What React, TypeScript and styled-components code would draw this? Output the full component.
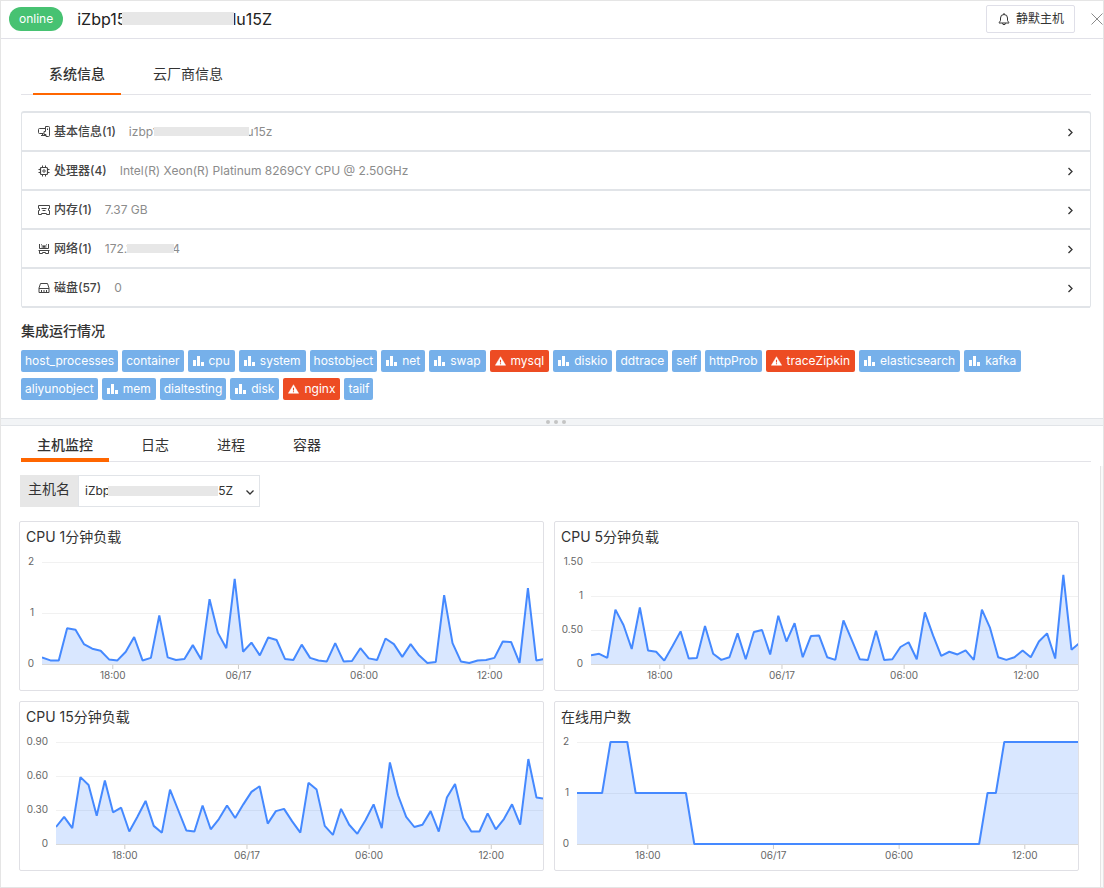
import React from "react";
import styled, { createGlobalStyle } from "styled-components";

const GlobalStyle = createGlobalStyle`
  *, *::before, *::after { box-sizing: border-box; }
  body {
    margin: 0;
    background: #fff;
    color: #333;
    font-family: Inter, "Noto Sans CJK SC", sans-serif;
    font-size: 12px;
    line-height: 20px;
  }
  button, select { font: inherit; color: inherit; }
`;

const line = "#e1e4e8";
const orange = "#ff6600";

const Page = styled.div`
  min-height: 100vh;
  border: 1px solid #e5e5e5;
  display: flex;
  flex-direction: column;
`;

const Header = styled.header`
  display: flex;
  align-items: center;
  height: 38px;
  padding: 0 0 2px 8px;
  border-bottom: 1px solid #e1e1e8;
`;

const Status = styled.span`
  height: 24px;
  padding: 0 10px;
  border-radius: 12px;
  background: #47c272;
  color: #fff;
  line-height: 24px;
`;

const HostTitle = styled.h1`
  flex: 1;
  display: flex;
  align-items: center;
  margin: 0 0 0 14px;
  font-size: 16px;
  font-weight: 400;
  color: #222;
`;

const Mask = styled.span<{ $width: number; $height?: number }>`
  position: relative;
  width: ${(p) => p.$width}px;
  height: ${(p) => p.$height ?? 9}px;
  margin: 0 -2px 0 -4px;
  background: #e7e7e7;
`;

const MuteButton = styled.button`
  display: flex;
  align-items: center;
  gap: 5px;
  height: 28px;
  padding: 0 10px;
  border: 1px solid #dfdfe8;
  border-radius: 2px;
  background: #fff;
`;

const CloseButton = styled.button`
  display: flex;
  margin-left: 16px;
  padding: 0;
  border: 0;
  background: none;
  color: #8a8a8a;
`;

const TabList = styled.nav<{ $compact?: boolean }>`
  display: flex;
  gap: 16px;
  height: ${(p) => (p.$compact ? 36 : 56)}px;
  margin: 0 12px 0 20px;
  padding-left: ${(p) => (p.$compact ? 0 : 12)}px;
  border-bottom: 1px solid #e3e3e8;
`;

const Tab = styled.button<{ $active?: boolean; $compact?: boolean }>`
  margin-bottom: -1px;
  padding: ${(p) => (p.$compact ? "6px 16px 0" : "16px 16px 0")};
  border: 0;
  border-bottom: ${(p) => (p.$compact ? 4 : 2)}px solid ${(p) => (p.$active ? orange : "transparent")};
  background: none;
  font-size: 14px;
  font-weight: ${(p) => (p.$active ? 500 : 400)};
`;

const InfoList = styled.div`
  margin: 16px 12px 0 20px;
  border: 1px solid ${line};
  border-width: 2px 1px 0;
  border-radius: 3px;
`;

const InfoRow = styled.button`
  display: flex;
  align-items: center;
  width: 100%;
  height: 39px;
  padding: 0 14px 0 16px;
  border: 0;
  border-bottom: 2px solid ${line};
  background: none;
  text-align: left;
`;

const InfoLabel = styled.span`
  margin: 0 13px 0 4px;
  font-weight: 500;
  color: #444;
`;

const InfoValue = styled.span`
  flex: 1;
  display: flex;
  align-items: center;
  color: #8c8c8c;
`;

const Section = styled.section`
  padding: 13px 12px 18px 20px;
`;

const SectionTitle = styled.h2`
  margin: 0 0 9px;
  font-size: 14px;
  font-weight: 500;
  line-height: 20px;
`;

const Tags = styled.div`
  display: flex;
  flex-wrap: wrap;
  gap: 6px 4px;
`;

const TagBox = styled.span<{ $kind?: "metric" | "alert" }>`
  display: flex;
  align-items: center;
  gap: 5px;
  height: 22px;
  padding: 0 ${(p) => (p.$kind ? 5 : 4)}px;
  border-radius: 2px;
  background: ${(p) => (p.$kind === "alert" ? "#ed4c23" : "#76b0ea")};
  color: #fff;
`;

const Splitter = styled.div`
  display: flex;
  align-items: center;
  justify-content: center;
  gap: 4px;
  height: 8px;
  padding-left: 8px;
  border: 1px solid ${line};
  border-width: 1px 0;
  background: #f2f4f6;
`;

const Dot = styled.i`
  width: 4px;
  height: 4px;
  border-radius: 2px;
  background: #c4c4c4;
`;

const Monitor = styled.div`
  flex: 1;
  display: flex;
  margin-top: 4px;
`;

const MonitorBody = styled.div`
  flex: 1;
  min-width: 0;
  padding: 9px 21px 16px 18px;
`;

const ScrollTrack = styled.div`
  width: 3px;
  border-left: 1px solid #e4e4e4;
  background: #fafafa;
`;

const Filter = styled.div`
  display: flex;
  height: 32px;
  margin: 0 0 14px 1px;
`;

const FilterLabel = styled.label`
  padding: 4px 8px;
  background: #e7e7e7;
  font-size: 14px;
`;

const SelectBox = styled.div`
  position: relative;
  width: 182px;
`;

const HostSelect = styled.select`
  width: 100%;
  height: 100%;
  padding: 0 24px 0 6px;
  border: 1px solid ${line};
  border-radius: 0;
  background: #fff;
  appearance: none;
`;

const SelectMask = styled.span`
  position: absolute;
  top: 11px;
  left: 30px;
  width: 110px;
  height: 10px;
  background: #e7e7e7;
  pointer-events: none;
`;

const SelectArrow = styled.svg`
  position: absolute;
  top: 12px;
  right: 5px;
  pointer-events: none;
`;

const Charts = styled.div`
  display: grid;
  grid-template-columns: 1fr 1fr;
  gap: 10px;
`;

const Panel = styled.article`
  height: 170px;
  border: 1px solid #e0e0e5;
  border-radius: 2px;
`;

const PanelTitle = styled.h3`
  margin: 5px 6px 8px;
  font-size: 14px;
  font-weight: 400;
  line-height: 20px;
`;

const ChartRow = styled.div`
  display: flex;
`;

const YAxis = styled.div<{ $wide?: boolean }>`
  display: flex;
  flex-direction: column;
  justify-content: space-between;
  align-items: flex-end;
  width: ${(p) => (p.$wide ? 36 : 22)}px;
  height: 114px;
  padding-right: 8px;
  font-size: 10px;
  line-height: 12px;
  color: #666;
`;

const Plot = styled.svg`
  flex: 1;
  min-width: 0;
  height: 122px;
  margin-top: 7px;
  overflow: visible;
  font-size: 10px;
  fill: #666;
`;

const stroke = { fill: "none", stroke: "currentColor", strokeWidth: 1 } as const;

const BellIcon = () => (
  <svg width="14" height="14" viewBox="0 0 14 14" {...stroke}>
    <path d="M3.5 8V6a3.5 3.5 0 0 1 7 0v2c0 1 .5 1.6 1.5 2.5v.5H2v-.5C3 9.6 3.5 9 3.5 8zM7 1v1.5M5.5 11.2a1.5 1.5 0 0 0 3 0" />
  </svg>
);

const CloseIcon = () => (
  <svg width="12" height="12" viewBox="0 0 12 12" {...stroke}>
    <path d="M.5 .5l11 11M11.5 .5l-11 11" />
  </svg>
);

const ChevronIcon = () => (
  <svg width="12" height="12" viewBox="0 0 12 12" {...stroke} stroke="#333" strokeWidth={1.3}>
    <path d="M4.5 3L8 6.5l-3.5 3.5" />
  </svg>
);

const icons: Record<string, React.ReactNode> = {
  host: (
    <>
      <path d="M7 2.5H1.5Q.5 2.5 .5 3.5V6.5Q.5 7.5 1.5 7.5H5.5M3 9.5h5M4.5 7.5v2" />
      <path d="M8 .5h2.5q1 0 1 1v8q0 1-1 1H8V8.5H6V5.5h1.5V.5zM9.5 2.5v1.5" />
    </>
  ),
  cpu: (
    <>
      <rect x="2.5" y="2.5" width="7" height="7" rx="1" strokeWidth={1.2} />
      <circle cx="6" cy="6" r="1.2" />
      <path d="M4.5 .5v2M7.5 .5v2M4.5 9.5v2M7.5 9.5v2M.5 4.5h2M.5 7.5h2M9.5 4.5h2M9.5 7.5h2" />
    </>
  ),
  memory: (
    <>
      <path d="M.5 1.5h11v3h-1v2h1v4h-3v-1h-5v1h-3v-4h1v-2h-1z" />
      <path d="M3.5 4.5h5M4.5 6.5h3" />
    </>
  ),
  network: (
    <>
      <path d="M1.5 1v4.5h9V1M3 1.500l1.500 1M9 1.500l-1.500 1M3.500 4h5M.5 7.500h11" />
      <path d="M1.500 7.500v3h3v-1h3v1h3v-3" />
      <circle cx="6" cy="3.5" r="1.2" fill="currentColor" stroke="none" />
    </>
  ),
  disk: <path d="M1 6l1.5-4.5h7L11 6v4.500H1zM1 6.5h10M3.5 8v2.5M6 8v2.5M8.5 8v2.5" />,
};

const BarsIcon = () => (
  <svg width="11" height="10" viewBox="0 0 11 10" fill="#fff">
    <path d="M0 4h3v6H0zM4 0h3v10H4zM8 6h3v4H8z" />
  </svg>
);

const AlertIcon = () => (
  <svg width="11" height="10" viewBox="0 0 12 10">
    <path d="M6 .3L11.6 9.7H.4z" fill="#fff" stroke="#fff" strokeWidth=".5" strokeLinejoin="round" />
    <path d="M6 3.5v3M6 7.4v1.2" stroke="#ed4c23" strokeWidth="1.2" />
  </svg>
);

type Info = { icon: string; label: string; before: string; mask?: number; after?: string };

const infos: Info[] = [
  { icon: "host", label: "基本信息(1)", before: "izbp1", mask: 95, after: "u15z" },
  { icon: "cpu", label: "处理器(4)", before: "Intel(R) Xeon(R) Platinum 8269CY CPU @ 2.50GHz" },
  { icon: "memory", label: "内存(1)", before: "7.37 GB" },
  { icon: "network", label: "网络(1)", before: "172.1", mask: 47, after: "4" },
  { icon: "disk", label: "磁盘(57)", before: "0" },
];

const tags: { name: string; kind?: "metric" | "alert" }[] = [
  { name: "host_processes" },
  { name: "container" },
  { name: "cpu", kind: "metric" },
  { name: "system", kind: "metric" },
  { name: "hostobject" },
  { name: "net", kind: "metric" },
  { name: "swap", kind: "metric" },
  { name: "mysql", kind: "alert" },
  { name: "diskio", kind: "metric" },
  { name: "ddtrace" },
  { name: "self" },
  { name: "httpProb" },
  { name: "traceZipkin", kind: "alert" },
  { name: "elasticsearch", kind: "metric" },
  { name: "kafka", kind: "metric" },
  { name: "aliyunobject" },
  { name: "mem", kind: "metric" },
  { name: "dialtesting" },
  { name: "disk", kind: "metric" },
  { name: "nginx", kind: "alert" },
  { name: "tailf" },
];

const repeat = (value: number, count: number) => Array<number>(count).fill(value);

const charts = [
  {
    title: "CPU 1分钟负载",
    scale: ["2", "1", "0"],
    max: 2,
    data: [
      0.13, 0.07, 0.07, 0.7, 0.67, 0.39, 0.3, 0.26, 0.09, 0.07, 0.24, 0.53, 0.07, 0.12, 0.95, 0.13, 0.08, 0.1, 0.37,
      0.09, 1.27, 0.61, 0.31, 1.67, 0.24, 0.42, 0.17, 0.52, 0.47, 0.1, 0.08, 0.38, 0.12, 0.07, 0.05, 0.41, 0.05, 0.06,
      0.31, 0.11, 0.08, 0.5, 0.39, 0.14, 0.39, 0.17, 0.02, 0.04, 1.35, 0.41, 0.05, 0.02, 0.07, 0.08, 0.12, 0.44, 0.43,
      0.02, 1.49, 0.07, 0.1,
    ],
  },
  {
    title: "CPU 5分钟负载",
    scale: ["1.50", "1", "0.50", "0"],
    max: 1.5,
    data: [
      0.13, 0.15, 0.09, 0.8, 0.57, 0.22, 0.83, 0.2, 0.18, 0.05, 0.26, 0.48, 0.08, 0.09, 0.56, 0.15, 0.06, 0.1, 0.45,
      0.07, 0.47, 0.5, 0.14, 0.71, 0.33, 0.6, 0.1, 0.41, 0.42, 0.1, 0.06, 0.64, 0.36, 0.07, 0.06, 0.49, 0.06, 0.07,
      0.25, 0.32, 0.07, 0.76, 0.42, 0.12, 0.18, 0.14, 0.2, 0.06, 0.8, 0.53, 0.1, 0.06, 0.1, 0.2, 0.1, 0.33, 0.45, 0.08,
      1.31, 0.21, 0.31,
    ],
  },
  {
    title: "CPU 15分钟负载",
    scale: ["0.90", "0.60", "0.30", "0"],
    max: 0.9,
    data: [
      0.15, 0.24, 0.14, 0.59, 0.52, 0.25, 0.56, 0.28, 0.32, 0.11, 0.24, 0.38, 0.16, 0.1, 0.48, 0.3, 0.12, 0.11, 0.34,
      0.13, 0.22, 0.34, 0.23, 0.35, 0.46, 0.51, 0.18, 0.29, 0.31, 0.2, 0.1, 0.54, 0.48, 0.16, 0.08, 0.31, 0.17, 0.09,
      0.21, 0.35, 0.14, 0.72, 0.43, 0.24, 0.15, 0.17, 0.29, 0.11, 0.41, 0.53, 0.23, 0.11, 0.11, 0.27, 0.13, 0.22, 0.35,
      0.17, 0.75, 0.41, 0.4,
    ],
  },
  {
    title: "在线用户数",
    scale: ["2", "1", "0"],
    max: 2,
    data: [...repeat(1, 4), ...repeat(2, 3), ...repeat(1, 7), ...repeat(0, 35), 1, 1, ...repeat(2, 10)],
  },
];

const PLOT_HEIGHT = 102;
const SPAN = 59.8;
const ticks = ["18:00", "06/17", "06:00", "12:00"].map((label, i) => ({
  label,
  x: `${((8.45 + i * 15) / SPAN) * 100}%`,
}));

function Chart({ title, scale, max, data }: (typeof charts)[number]) {
  const points = data.map((v, i) => `${i} ${PLOT_HEIGHT - (v / max) * PLOT_HEIGHT}`).join("L");
  return (
    <Panel>
      <PanelTitle>{title}</PanelTitle>
      <ChartRow>
        <YAxis $wide={scale.length > 3}>
          {scale.map((s) => (
            <span key={s}>{s}</span>
          ))}
        </YAxis>
        <Plot role="img" aria-label={title}>
          {scale.map((s, i) => {
            const y = (PLOT_HEIGHT / (scale.length - 1)) * i + 0.5;
            const base = i === scale.length - 1;
            return <line key={s} x1="0" x2="100%" y1={y} y2={y} stroke={base ? "#d9d9d9" : "#f1f1f1"} />;
          })}
          {ticks.map((t) => (
            <g key={t.label}>
              <line x1={t.x} x2={t.x} y1="103" y2="107" stroke="#ccc" />
              <text x={t.x} y="117" textAnchor="middle">
                {t.label}
              </text>
            </g>
          ))}
          <svg
            y="-2"
            width="100%"
            height="106"
            viewBox={`0 -2 ${SPAN} 106`}
            preserveAspectRatio="none"
            overflow="hidden"
          >
            <path d={`M0 ${PLOT_HEIGHT}L${points}V${PLOT_HEIGHT}Z`} fill="#4289ff" fillOpacity=".2" />
            <path
              d={`M${points}`}
              fill="none"
              stroke="#4589ff"
              strokeWidth="2"
              strokeLinejoin="bevel"
              vectorEffect="non-scaling-stroke"
            />
          </svg>
        </Plot>
      </ChartRow>
    </Panel>
  );
}

export default function App() {
  return (
    <Page>
      <GlobalStyle />
      <Header>
        <Status>online</Status>
        <HostTitle>
          iZbp15
          <Mask $width={112} $height={13} />
          lu15Z
        </HostTitle>
        <MuteButton>
          <BellIcon />
          静默主机
        </MuteButton>
        <CloseButton aria-label="关闭">
          <CloseIcon />
        </CloseButton>
      </Header>

      <TabList>
        <Tab $active>系统信息</Tab>
        <Tab>云厂商信息</Tab>
      </TabList>

      <InfoList>
        {infos.map((info) => (
          <InfoRow key={info.label}>
            <svg width="12" height="12" viewBox="0 0 12 12" {...stroke} color="#444">
              {icons[info.icon]}
            </svg>
            <InfoLabel>{info.label}</InfoLabel>
            <InfoValue>
              {info.before}
              {info.mask && <Mask $width={info.mask} />}
              {info.after}
            </InfoValue>
            <ChevronIcon />
          </InfoRow>
        ))}
      </InfoList>

      <Section>
        <SectionTitle>集成运行情况</SectionTitle>
        <Tags>
          {tags.map((tag) => (
            <TagBox key={tag.name} $kind={tag.kind}>
              {tag.kind === "metric" && <BarsIcon />}
              {tag.kind === "alert" && <AlertIcon />}
              {tag.name}
            </TagBox>
          ))}
        </Tags>
      </Section>

      <Splitter>
        <Dot />
        <Dot />
        <Dot />
      </Splitter>

      <TabList $compact>
        <Tab $compact $active>
          主机监控
        </Tab>
        <Tab $compact>日志</Tab>
        <Tab $compact>进程</Tab>
        <Tab $compact>容器</Tab>
      </TabList>

      <Monitor>
        <MonitorBody>
          <Filter>
            <FilterLabel htmlFor="host">主机名</FilterLabel>
            <SelectBox>
              <HostSelect id="host">
                <option>{`iZbp${"\u00a0".repeat(32)}5Z`}</option>
              </HostSelect>
              <SelectMask />
              <SelectArrow width="10" height="10" viewBox="0 0 10 10" {...stroke} strokeWidth={1.3}>
                <path d="M1.5 3.5L5 7l3.5-3.5" />
              </SelectArrow>
            </SelectBox>
          </Filter>
          <Charts>
            {charts.map((chart) => (
              <Chart key={chart.title} {...chart} />
            ))}
          </Charts>
        </MonitorBody>
        <ScrollTrack />
      </Monitor>
    </Page>
  );
}
